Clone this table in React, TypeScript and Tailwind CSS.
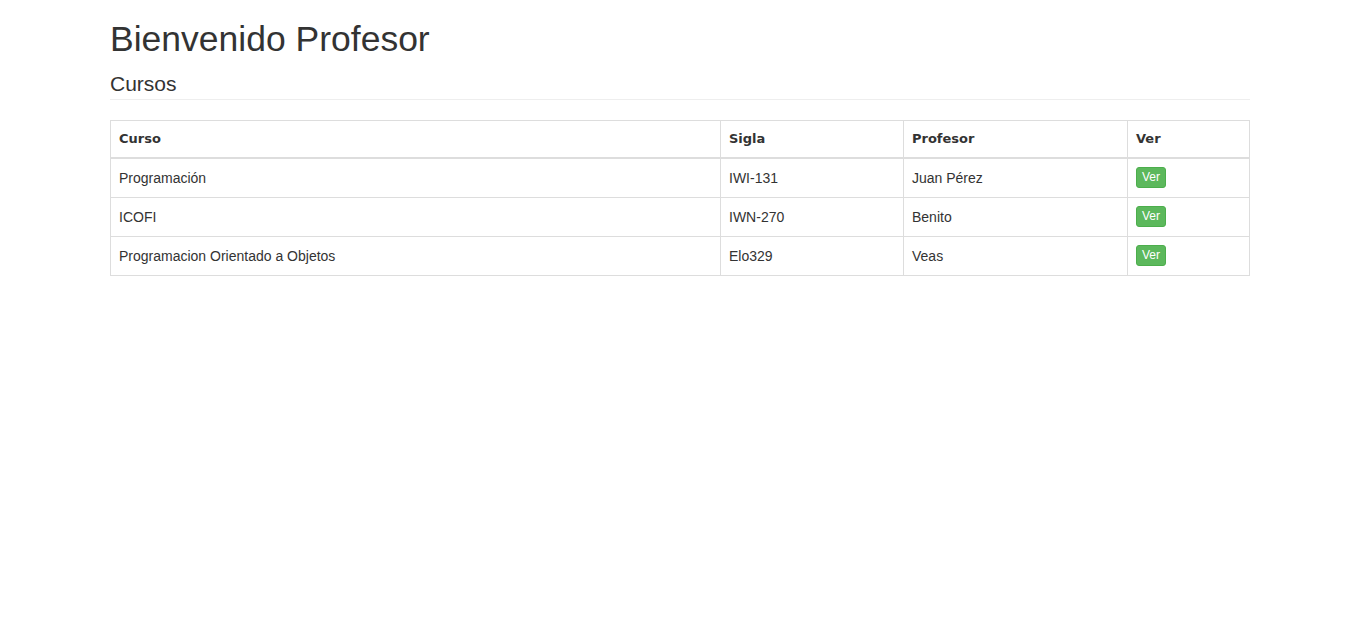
const courses = [
  { name: 'Programación', code: 'IWI-131', teacher: 'Juan Pérez' },
  { name: 'ICOFI', code: 'IWN-270', teacher: 'Benito' },
  { name: 'Programacion Orientado a Objetos', code: 'Elo329', teacher: 'Veas' },
];

export default function App() {
  return (
    <main className="min-h-screen bg-white font-['Liberation_Sans',Arial,sans-serif] text-[#333]">
      <section className="mx-auto w-[1140px]">
        <h1 className="mt-5 text-[35.5px] leading-[39.5px]">Bienvenido Profesor</h1>
        <h3 className="mt-3 border-b border-[#eee] pb-[4px] text-[21px] leading-[23px]">Cursos</h3>

        <table className="mt-5 w-full border-collapse border border-[#ddd] text-[14px] leading-[18px]">
          <thead>
            <tr className="h-[38px] text-left font-['DejaVu_Sans',sans-serif] text-[13px] font-bold">
              <th className="w-[610px] border border-b-2 border-[#ddd] px-2 align-middle">Curso</th>
              <th className="w-[183px] border border-b-2 border-[#ddd] px-2 align-middle">Sigla</th>
              <th className="w-[224px] border border-b-2 border-[#ddd] px-2 align-middle">Profesor</th>
              <th className="border border-b-2 border-[#ddd] px-2 align-middle">Ver</th>
            </tr>
          </thead>
          <tbody>
            {courses.map((c) => (
              <tr key={c.code} className="h-[39px]">
                <td className="border border-[#ddd] px-2 align-middle">{c.name}</td>
                <td className="border border-[#ddd] px-2 align-middle">{c.code}</td>
                <td className="border border-[#ddd] px-2 align-middle">{c.teacher}</td>
                <td className="border border-[#ddd] px-2 align-middle">
                  <button className="h-[21px] rounded-[3px] border border-[#4cae4c] bg-[#5cb85c] px-[5px] text-[12px] leading-[19px] text-white">
                    Ver
                  </button>
                </td>
              </tr>
            ))}
          </tbody>
        </table>
      </section>
    </main>
  );
}
